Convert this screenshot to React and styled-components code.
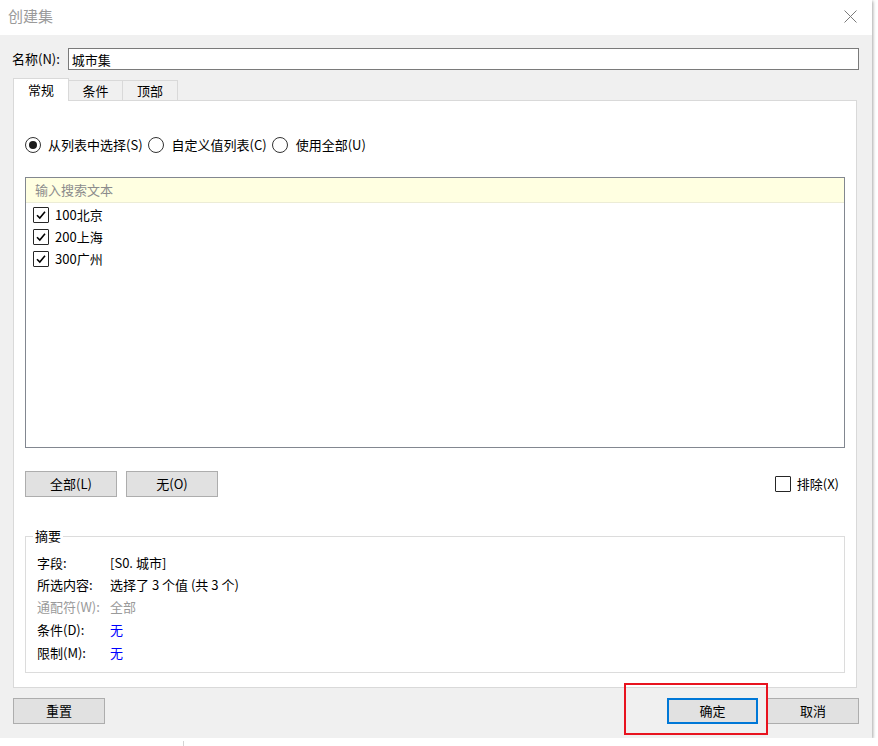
import styled, { createGlobalStyle } from "styled-components";

const GlobalStyle = createGlobalStyle`
  html, body {
    margin: 0;
    padding: 0;
  }
  body {
    background:
      linear-gradient(#d4d4d4, #d4d4d4) 183px 741px / 1px 10px no-repeat,
      #ffffff;
    font-family: "Noto Sans CJK SC", "Noto Sans", sans-serif;
    font-size: 13px;
    color: #000;
  }
`;

const Dialog = styled.div`
  position: relative;
  width: 872px;
  height: 738px;
  background: #f0f0f0;
  box-shadow: 1px 1px 3px rgba(0, 0, 0, 0.35);
  display: flex;
  flex-direction: column;
`;

const TitleBar = styled.div`
  height: 35px;
  flex: none;
  background: #ffffff;
  display: flex;
  align-items: center;
  justify-content: space-between;
  padding: 0 15px 0 8px;
  box-sizing: border-box;
`;

const Title = styled.div`
  font-size: 15px;
  line-height: 20px;
  color: #9a9a9a;
  margin-top: -3px;
`;

const CloseButton = styled.button`
  width: 13px;
  height: 13px;
  padding: 0;
  border: none;
  background: none;
  display: flex;
  margin-top: -3px;
`;

const Content = styled.div`
  flex: 1;
  display: flex;
  flex-direction: column;
  padding: 0 15px 0 13px;
  min-height: 0;
`;

const NameRow = styled.div`
  display: flex;
  align-items: center;
  gap: 8px;
  height: 22px;
  margin: 13px -2px 0 -1px;
`;

const Label = styled.label`
  line-height: 18px;
  white-space: nowrap;
`;

const TextInput = styled.input`
  flex: 1;
  height: 22px;
  box-sizing: border-box;
  border: 1px solid #7a7a7a;
  padding: 0 3px;
  font: inherit;
  background: #fff;
  outline: none;
`;

const TabStrip = styled.div`
  display: flex;
  align-items: flex-end;
  height: 23px;
  margin-top: 8px;
  margin-bottom: -1px;
`;

const Tab = styled.div`
  position: relative;
  z-index: ${(p) => (p.$active ? 2 : 1)};
  width: ${(p) => p.$w}px;
  height: ${(p) => (p.$active ? 23 : 21)}px;
  box-sizing: border-box;
  border: 1px solid #d9d9d9;
  border-bottom: ${(p) => (p.$active ? "none" : "1px solid #d9d9d9")};
  margin-left: ${(p) => (p.$first ? 0 : -1)}px;
  background: ${(p) => (p.$active ? "#ffffff" : "#f0f0f0")};
  display: flex;
  align-items: center;
  justify-content: center;
  line-height: 18px;
  padding-top: ${(p) => (p.$active ? 0 : 1)}px;
`;

const Panel = styled.div`
  flex: 1;
  background: #ffffff;
  border: 1px solid #d9d9d9;
  display: flex;
  flex-direction: column;
  padding: 0 11px 0 11px;
`;

const RadioRow = styled.div`
  display: flex;
  align-items: center;
  height: 16px;
  margin-top: 36px;
`;

const RadioOption = styled.label`
  display: flex;
  align-items: center;
  gap: ${(p) => p.$gap}px;
  margin-right: 5px;
  line-height: 18px;
  white-space: nowrap;
`;

const RadioCircle = styled.span`
  width: 16px;
  height: 16px;
  box-sizing: border-box;
  border: 1px solid #333333;
  border-radius: 50%;
  display: flex;
  align-items: center;
  justify-content: center;
  flex: none;

  &::after {
    content: "";
    display: ${(p) => (p.$checked ? "block" : "none")};
    width: 8px;
    height: 8px;
    border-radius: 50%;
    background: #1a1a1a;
  }
`;

const ListBox = styled.div`
  margin-top: 24px;
  height: 271px;
  box-sizing: border-box;
  border: 1px solid #828790;
  display: flex;
  flex-direction: column;
`;

const SearchRow = styled.div`
  height: 25px;
  box-sizing: border-box;
  background: #ffffe1;
  border-bottom: 1px solid #ececd6;
  color: #8c8c8c;
  display: flex;
  align-items: center;
  padding-left: 9px;
  line-height: 18px;
`;

const ListItems = styled.div`
  display: flex;
  flex-direction: column;
`;

const ListItem = styled.div`
  height: 22px;
  display: flex;
  align-items: center;
  gap: 6px;
  padding-left: 7px;
  line-height: 18px;
  &:first-child {
    height: 23px;
  }
`;

const CheckBox = styled.span`
  width: 16px;
  height: 16px;
  box-sizing: border-box;
  border: 1px solid #262626;
  border-radius: 1px;
  display: flex;
  align-items: center;
  justify-content: center;
  flex: none;
  background: #fff;
`;

const ButtonRow = styled.div`
  display: flex;
  align-items: center;
  gap: 9px;
  margin-top: 23px;
  height: 26px;
`;

const Button = styled.button`
  width: ${(p) => p.$w || 92}px;
  height: 26px;
  box-sizing: border-box;
  background: #e1e1e1;
  border: ${(p) => (p.$default ? "2px solid #0078d7" : "1px solid #adadad")};
  font: inherit;
  color: #000;
  padding: 0;
  line-height: 18px;
  cursor: default;
`;

const ExcludeOption = styled.label`
  margin-left: auto;
  margin-right: 6px;
  display: flex;
  align-items: center;
  gap: 6px;
  line-height: 18px;
`;

const Group = styled.fieldset`
  margin: 30px 0 0;
  padding: 0 0 7px 11px;
  border: 1px solid #dcdcdc;
  min-width: 0;
`;

const Legend = styled.legend`
  padding: 0 2px;
  margin-left: -4px;
  line-height: 18px;
`;

const SummaryGrid = styled.div`
  display: grid;
  grid-template-columns: 73px 1fr;
  grid-template-rows: 22px 22px 22px 23px 24px;
  align-items: center;
  margin-top: 7px;
  line-height: 18px;
`;

const SummaryCell = styled.div`
  color: ${(p) => p.$color || "#000"};
  white-space: nowrap;
`;

const Footer = styled.div`
  flex: none;
  display: flex;
  align-items: center;
  padding: 10px 13px 14px 13px;
`;

const FooterRight = styled.div`
  margin-left: auto;
  display: flex;
  gap: 9px;
`;

const Highlight = styled.div`
  position: absolute;
  left: 624px;
  top: 683px;
  width: 144px;
  height: 52px;
  box-sizing: border-box;
  border: 2px solid #e8131f;
  pointer-events: none;
`;

const CheckMark = () => (
  <svg width="12" height="12" viewBox="0 0 12 12">
    <path d="M2 6.2 L4.8 9 L10 2.8" fill="none" stroke="#000" strokeWidth="1.6" />
  </svg>
);

const summary = [
  { label: "字段:", value: "[S0. 城市]" },
  { label: "所选内容:", value: "选择了 3 个值 (共 3 个)" },
  { label: "通配符(W):", value: "全部", muted: true },
  { label: "条件(D):", value: "无", blue: true },
  { label: "限制(M):", value: "无", blue: true },
];

const items = ["100北京", "200上海", "300广州"];

export default function App() {
  return (
    <>
      <GlobalStyle />
      <Dialog>
        <TitleBar>
          <Title>创建集</Title>
          <CloseButton aria-label="关闭">
            <svg width="13" height="13" viewBox="0 0 13 13">
              <path d="M0.5 0.5 L12.5 12.5 M12.5 0.5 L0.5 12.5" stroke="#7a7a7a" strokeWidth="1" />
            </svg>
          </CloseButton>
        </TitleBar>
        <Content>
          <NameRow>
            <Label htmlFor="set-name">名称(N):</Label>
            <TextInput id="set-name" defaultValue="城市集" />
          </NameRow>
          <TabStrip>
            <Tab $w={56} $active $first>常规</Tab>
            <Tab $w={55}>条件</Tab>
            <Tab $w={56}>顶部</Tab>
          </TabStrip>
          <Panel>
            <RadioRow>
              <RadioOption $gap={7}>
                <RadioCircle $checked />
                从列表中选择(S)
              </RadioOption>
              <RadioOption $gap={8}>
                <RadioCircle />
                自定义值列表(C)
              </RadioOption>
              <RadioOption $gap={8}>
                <RadioCircle />
                使用全部(U)
              </RadioOption>
            </RadioRow>
            <ListBox>
              <SearchRow>输入搜索文本</SearchRow>
              <ListItems>
                {items.map((it) => (
                  <ListItem key={it}>
                    <CheckBox>
                      <CheckMark />
                    </CheckBox>
                    {it}
                  </ListItem>
                ))}
              </ListItems>
            </ListBox>
            <ButtonRow>
              <Button>全部(L)</Button>
              <Button>无(O)</Button>
              <ExcludeOption>
                <CheckBox />
                排除(X)
              </ExcludeOption>
            </ButtonRow>
            <Group>
              <Legend>摘要</Legend>
              <SummaryGrid>
                {summary.map((row) => [
                  <SummaryCell key={row.label} $color={row.muted ? "#9a9a9a" : undefined}>
                    {row.label}
                  </SummaryCell>,
                  <SummaryCell
                    key={row.label + "v"}
                    $color={row.muted ? "#9a9a9a" : row.blue ? "#0000ff" : undefined}
                  >
                    {row.value}
                  </SummaryCell>,
                ])}
              </SummaryGrid>
            </Group>
          </Panel>
        </Content>
        <Footer>
          <Button>重置</Button>
          <FooterRight>
            <Button $w={91} $default>确定</Button>
            <Button $w={92}>取消</Button>
          </FooterRight>
        </Footer>
        <Highlight />
      </Dialog>
    </>
  );
}
